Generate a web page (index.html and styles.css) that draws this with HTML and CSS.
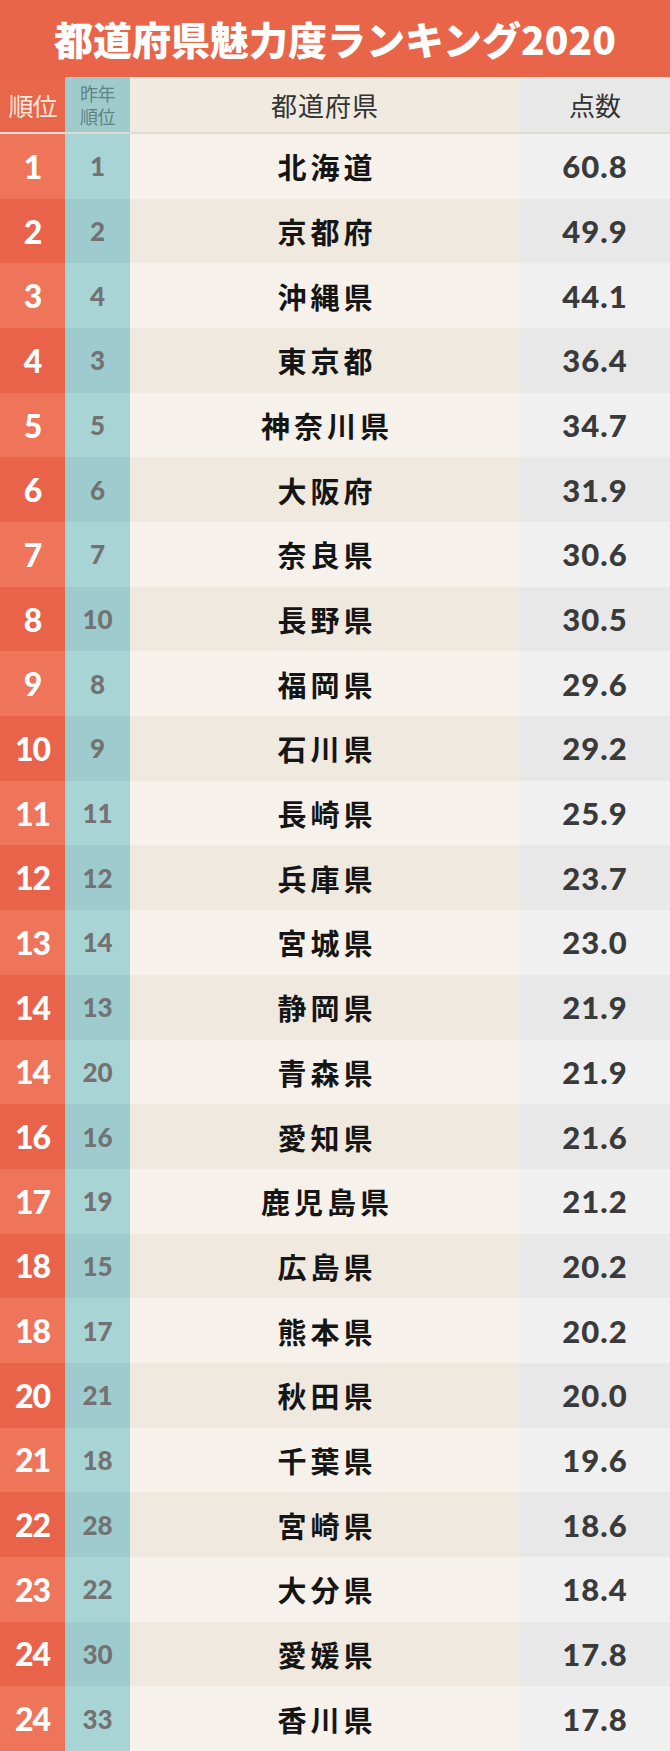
FILE: index.html
```html
<!DOCTYPE html>
<html lang="ja">
<head>
<meta charset="utf-8">
<title>都道府県魅力度ランキング2020</title>
<link rel="stylesheet" href="styles.css">
</head>
<body>
<div class="page">
  <header class="title">都道府県魅力度ランキング2020</header>
  <div class="head">
    <div class="h-rank">順位</div>
    <div class="h-prev"><span>昨年</span><span>順位</span></div>
    <div class="h-name">都道府県</div>
    <div class="h-score">点数</div>
  </div>
  <div class="rows">
    <div class="row"><div class="rank">1</div><div class="prev">1</div><div class="name">北海道</div><div class="score">60.8</div></div>
    <div class="row"><div class="rank">2</div><div class="prev">2</div><div class="name">京都府</div><div class="score">49.9</div></div>
    <div class="row"><div class="rank">3</div><div class="prev">4</div><div class="name">沖縄県</div><div class="score">44.1</div></div>
    <div class="row"><div class="rank">4</div><div class="prev">3</div><div class="name">東京都</div><div class="score">36.4</div></div>
    <div class="row"><div class="rank">5</div><div class="prev">5</div><div class="name">神奈川県</div><div class="score">34.7</div></div>
    <div class="row"><div class="rank">6</div><div class="prev">6</div><div class="name">大阪府</div><div class="score">31.9</div></div>
    <div class="row"><div class="rank">7</div><div class="prev">7</div><div class="name">奈良県</div><div class="score">30.6</div></div>
    <div class="row"><div class="rank">8</div><div class="prev">10</div><div class="name">長野県</div><div class="score">30.5</div></div>
    <div class="row"><div class="rank">9</div><div class="prev">8</div><div class="name">福岡県</div><div class="score">29.6</div></div>
    <div class="row"><div class="rank">10</div><div class="prev">9</div><div class="name">石川県</div><div class="score">29.2</div></div>
    <div class="row"><div class="rank">11</div><div class="prev">11</div><div class="name">長崎県</div><div class="score">25.9</div></div>
    <div class="row"><div class="rank">12</div><div class="prev">12</div><div class="name">兵庫県</div><div class="score">23.7</div></div>
    <div class="row"><div class="rank">13</div><div class="prev">14</div><div class="name">宮城県</div><div class="score">23.0</div></div>
    <div class="row"><div class="rank">14</div><div class="prev">13</div><div class="name">静岡県</div><div class="score">21.9</div></div>
    <div class="row"><div class="rank">14</div><div class="prev">20</div><div class="name">青森県</div><div class="score">21.9</div></div>
    <div class="row"><div class="rank">16</div><div class="prev">16</div><div class="name">愛知県</div><div class="score">21.6</div></div>
    <div class="row"><div class="rank">17</div><div class="prev">19</div><div class="name">鹿児島県</div><div class="score">21.2</div></div>
    <div class="row"><div class="rank">18</div><div class="prev">15</div><div class="name">広島県</div><div class="score">20.2</div></div>
    <div class="row"><div class="rank">18</div><div class="prev">17</div><div class="name">熊本県</div><div class="score">20.2</div></div>
    <div class="row"><div class="rank">20</div><div class="prev">21</div><div class="name">秋田県</div><div class="score">20.0</div></div>
    <div class="row"><div class="rank">21</div><div class="prev">18</div><div class="name">千葉県</div><div class="score">19.6</div></div>
    <div class="row"><div class="rank">22</div><div class="prev">28</div><div class="name">宮崎県</div><div class="score">18.6</div></div>
    <div class="row"><div class="rank">23</div><div class="prev">22</div><div class="name">大分県</div><div class="score">18.4</div></div>
    <div class="row"><div class="rank">24</div><div class="prev">30</div><div class="name">愛媛県</div><div class="score">17.8</div></div>
    <div class="row"><div class="rank">24</div><div class="prev">33</div><div class="name">香川県</div><div class="score">17.8</div></div>
  </div>
</div>
</body>
</html>
```

FILE: styles.css
```css
* { box-sizing: border-box; }
html, body { margin: 0; padding: 0; }
body {
  width: 670px;
  height: 1751px;
  overflow: hidden;
  background: #f6f2eb;
  font-family: "Noto Sans CJK JP", "Noto Sans", sans-serif;
}
.page {
  display: flex;
  flex-direction: column;
  width: 670px;
  height: 1751px;
}
.title {
  height: 77px;
  flex: none;
  background: #e8654a;
  color: #ffffff;
  font-weight: 900;
  font-size: 39px;
  letter-spacing: 0px;
  display: flex;
  align-items: center;
  justify-content: center;
  padding-bottom: 2px;
}
.head {
  height: 57px;
  flex: none;
  display: grid;
  grid-template-columns: 65px 65px 390px 150px;
  border-bottom: 2px solid rgba(0, 0, 0, 0.09);
}
.head > div {
  display: flex;
  align-items: center;
  justify-content: center;
  text-align: center;
  font-weight: 400;
}
.h-rank {
  background: #e8664a;
  color: #fde6da;
  font-size: 25px;
  letter-spacing: -1px;
}
.h-prev {
  background: #9fcbcc;
  color: #5f8384;
  font-size: 18px;
  line-height: 23px;
  letter-spacing: -0.5px;
  flex-direction: column;
  padding-top: 1px;
}
.h-prev span { display: block; height: 23px; }
.h-name {
  background: #f0eae0;
  color: #333333;
  font-size: 26px;
  letter-spacing: 1px;
}
.h-score {
  background: #e8e8e8;
  color: #333333;
  font-size: 26px;
}
.rows {
  flex: 1;
  display: grid;
  grid-template-rows: repeat(25, 1fr);
}
.row {
  display: grid;
  grid-template-columns: 65px 65px 390px 150px;
}
.row > div {
  display: flex;
  align-items: center;
  justify-content: center;
}
.rank {
  background: #ee755a;
  color: #ffffff;
  font-family: "Lato", "Noto Sans", sans-serif;
  font-weight: 900;
  font-size: 32px;
  letter-spacing: -1px;
}
.prev {
  background: #a9d4d5;
  color: #727272;
  font-family: "Lato", "Noto Sans", sans-serif;
  font-weight: 900;
  font-size: 26px;
  letter-spacing: 0px;
}
.name {
  background: #f6f2eb;
  color: #151515;
  font-weight: 700;
  font-size: 29px;
  letter-spacing: 4px;
  padding-left: 4px;
}
.score {
  background: #f0f0f0;
  color: #3a3a3a;
  font-family: "Lato", "Noto Sans", sans-serif;
  font-weight: 900;
  font-size: 31px;
  letter-spacing: 1px;
}
.row:nth-child(even) .rank { background: #e8634a; }
.row:nth-child(even) .prev { background: #9ecbcd; }
.row:nth-child(even) .name { background: #f0e9df; }
.row:nth-child(even) .score { background: #e8e8e8; }
```
